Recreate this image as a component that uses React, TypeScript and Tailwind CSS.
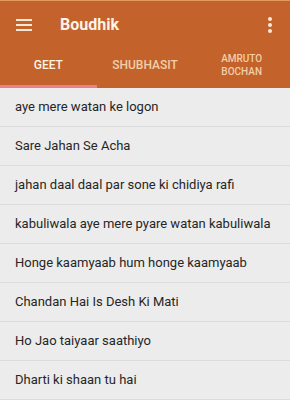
import React, { useState } from "react";

const TABS = [
  { id: "geet", label: ["GEET"] },
  { id: "shubhasit", label: ["SHUBHASIT"] },
  { id: "amruto", label: ["AMRUTO", "BOCHAN"] },
];

const SONGS = [
  "aye mere watan ke logon",
  "Sare Jahan Se Acha",
  "jahan daal daal par sone ki chidiya rafi",
  "kabuliwala aye mere pyare watan kabuliwala",
  "Honge kaamyaab hum honge kaamyaab",
  "Chandan Hai Is Desh Ki Mati",
  "Ho Jao taiyaar saathiyo",
  "Dharti ki shaan tu hai",
];

export default function App() {
  const [tab, setTab] = useState("geet");

  return (
    <div className="w-[290px] h-[400px] overflow-hidden bg-[#ececec] font-['Roboto',sans-serif]">
      {/* App bar */}
      <div className="bg-[#c3622b] border-t border-[#e39a5f]">
        <div className="flex items-center h-[47px] pl-4 pr-3">
          <svg width="16" height="12" viewBox="0 0 16 12" className="shrink-0">
            <rect x="0" y="0" width="16" height="2" fill="#fbe9d7" />
            <rect x="0" y="5" width="16" height="2" fill="#fbe9d7" />
            <rect x="0" y="10" width="16" height="2" fill="#fbe9d7" />
          </svg>
          <span className="ml-[28px] text-[16px] font-bold text-[#fdf3e8]">Boudhik</span>
          <div className="ml-auto flex flex-col gap-[2px] items-center w-4">
            <span className="w-[4px] h-[4px] rounded-full bg-[#fbe9d7]" />
            <span className="w-[4px] h-[4px] rounded-full bg-[#fbe9d7]" />
            <span className="w-[4px] h-[4px] rounded-full bg-[#fbe9d7]" />
          </div>
        </div>

        {/* Tabs */}
        <div className="flex h-[40px]">
          {TABS.map((t) => (
            <button
              key={t.id}
              onClick={() => setTab(t.id)}
              className={`flex-1 flex flex-col items-center justify-center pb-[3px] font-medium border-b-[3px] ${
                t.label.length > 1 ? "text-[10px] leading-[13px]" : "text-[12px] leading-[14px]"
              } ${
                tab === t.id
                  ? "text-[#fff3e2] border-[#e8808c]"
                  : "text-[#f2cfa8] border-transparent"
              }`}
            >
              {t.label.map((l) => (
                <span key={l}>{l}</span>
              ))}
            </button>
          ))}
        </div>
      </div>

      {/* List */}
      <div>
        {SONGS.map((s) => (
          <div
            key={s}
            className="h-[39px] flex items-center px-[15px] border-b border-[#dcdcdc] text-[13px] text-[#262626]"
          >
            {s}
          </div>
        ))}
      </div>
    </div>
  );
}
